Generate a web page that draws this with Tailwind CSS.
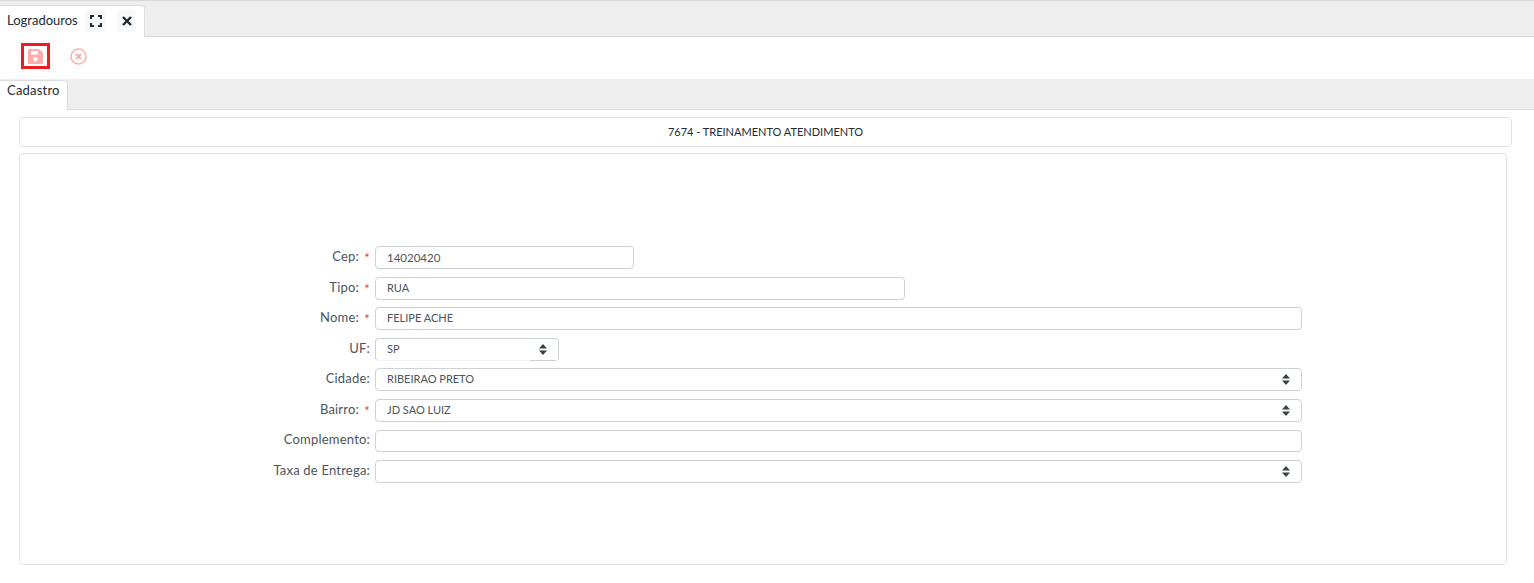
<!DOCTYPE html>
<html lang="en">
<head>
    <meta charset="UTF-8">
    <title>Logradouros</title>
    <script src="https://cdn.jsdelivr.net/npm/@tailwindcss/browser@4"></script>
</head>
<body class="bg-white font-['Lato',sans-serif] text-[11px] text-[#4a5560] h-[583px] overflow-hidden">
    <!-- top tab bar -->
    <div class="h-[37px] bg-[#eeeeee] border-t border-[#d9d9d9] border-b flex items-end">
        <div class="h-[32px] w-[145px] -mb-px pb-[2px] bg-white border border-b-0 border-l-0 border-[#dddddd] rounded-tr-[4px] flex items-center pl-[7px]">
            <span class="w-[78px] text-[13px] text-[#222b36]">Logradouros</span>
            <span class="w-[21px] h-[22px] bg-[#f7f8fa] rounded-[4px] flex items-center justify-center">
                <svg width="12" height="12" viewBox="0 0 12 12" fill="none" stroke="#1f2a37" stroke-width="2"><path d="M1 4V1h3M8 1h3v3M11 8v3H8M4 11H1V8"/></svg>
            </span>
            <span class="w-[19px] h-[22px] ml-[11px] bg-[#f7f8fa] rounded-[4px] flex items-center justify-center">
                <svg width="10" height="10" viewBox="0 0 10 10" fill="none" stroke="#1f2a37" stroke-width="2.4"><path d="M1 1l8 8M9 1l-8 8"/></svg>
            </span>
        </div>
    </div>
    <!-- toolbar -->
    <div class="h-[42px] flex items-center pl-[21px] pb-[4px]">
        <div class="w-[29px] h-[26px] border-[3px] border-[#ed1c24] flex items-center justify-center">
            <svg width="15" height="15" viewBox="0 0 15 15" fill="#ffacac"><path fill-rule="evenodd" d="M1.5 0H11l4 4v9.5a1.5 1.5 0 0 1-1.5 1.5h-12A1.5 1.5 0 0 1 0 13.5v-12A1.5 1.5 0 0 1 1.5 0zM3 2v3.5h7V2zM7.5 8a2.2 2.2 0 1 0 0 4.4 2.2 2.2 0 0 0 0-4.4z"/></svg>
        </div>
        <svg class="ml-[20px]" width="17" height="17" viewBox="0 0 17 17" fill="none" stroke="#ffacac"><circle cx="8.5" cy="8.5" r="7.5" stroke-width="1.5"/><path d="M6 6l5 5M11 6l-5 5" stroke-width="2"/></svg>
    </div>
    <!-- inner tabs -->
    <div class="h-[31px] bg-[#eeeeee] border-b border-[#d9d9d9] flex items-end">
        <div class="h-[30px] w-[68px] -mb-px bg-white border border-b-0 border-l-0 border-[#dddddd] rounded-tr-[4px] pl-[7px] text-[13px] tracking-[0.2px] text-[#222b36]">Cadastro</div>
    </div>
    <div class="pl-[19px] pt-[7px]">
        <div class="w-[1493px] h-[30px] border border-[#e2e2e2] rounded-[4px] flex items-center justify-center text-[#222b36]">7674 - TREINAMENTO ATENDIMENTO</div>
        <div class="w-[1488px] h-[412px] mt-[6px] border border-[#e2e2e2] rounded-[4px] pt-[92px] flex flex-col">
            <div class="flex h-[23px] mb-[8px] items-center">
                <label class="w-[350px] flex justify-end text-[13px] tracking-[0.2px]"><span>Cep:</span><span class="w-[11px] text-right text-[13px] pt-[2px] text-[#e8344a]">*</span></label>
                <div class="ml-[5px] w-[259px] h-[23px] border border-[#cdd1d8] rounded-[4px] pl-[11px] flex items-center text-[11.5px]">14020420</div>
            </div>
            <div class="flex h-[23px] mb-[7px] items-center">
                <label class="w-[350px] flex justify-end text-[13px] tracking-[0.2px]"><span>Tipo:</span><span class="w-[11px] text-right text-[13px] pt-[2px] text-[#e8344a]">*</span></label>
                <div class="ml-[5px] w-[530px] h-[23px] border border-[#cdd1d8] rounded-[4px] pl-[11px] flex items-center">RUA</div>
            </div>
            <div class="flex h-[23px] mb-[8px] items-center">
                <label class="w-[350px] flex justify-end text-[13px] tracking-[0.2px]"><span>Nome:</span><span class="w-[11px] text-right text-[13px] pt-[2px] text-[#e8344a]">*</span></label>
                <div class="ml-[5px] w-[927px] h-[23px] border border-[#cdd1d8] rounded-[4px] pl-[11px] flex items-center">FELIPE ACHE</div>
            </div>
            <div class="flex h-[23px] mb-[7px] items-center">
                <label class="w-[350px] text-right pb-[2px] text-[13px] tracking-[0.2px]">UF:</label>
                <!-- bottom border only shows under the arrow part -->
                <div class="relative ml-[5px] w-[184px] h-[23px] border border-[#cdd1d8] border-b-[#f1f2f4] rounded-[4px] pl-[11px] pr-[11px] flex items-center justify-between">SP
                    <svg width="8" height="11" viewBox="0 0 8 11" fill="#3a4048"><path d="M4 0l4 4.5H0zM4 11L0 6.5h8z"/></svg>
                    <span class="absolute right-[2px] -bottom-px w-[26px] h-px bg-[#cdd1d8]"></span>
                </div>
            </div>
            <div class="flex h-[23px] mb-[8px] items-center">
                <label class="w-[350px] text-right pb-[2px] text-[13px] tracking-[0.2px]">Cidade:</label>
                <div class="ml-[5px] w-[927px] h-[23px] border border-[#cdd1d8] rounded-[4px] pl-[11px] pr-[11px] flex items-center justify-between">RIBEIRAO PRETO
                    <svg width="8" height="11" viewBox="0 0 8 11" fill="#3a4048"><path d="M4 0l4 4.5H0zM4 11L0 6.5h8z"/></svg>
                </div>
            </div>
            <div class="flex h-[23px] mb-[8px] items-center">
                <label class="w-[350px] flex justify-end text-[13px] tracking-[0.2px]"><span>Bairro:</span><span class="w-[11px] text-right text-[13px] pt-[2px] text-[#e8344a]">*</span></label>
                <div class="ml-[5px] w-[927px] h-[23px] border border-[#cdd1d8] rounded-[4px] pl-[11px] pr-[11px] flex items-center justify-between">JD SAO LUIZ
                    <svg width="8" height="11" viewBox="0 0 8 11" fill="#3a4048"><path d="M4 0l4 4.5H0zM4 11L0 6.5h8z"/></svg>
                </div>
            </div>
            <div class="flex h-[22px] mb-[8px] items-center">
                <label class="w-[350px] text-right pb-[2px] text-[13px] tracking-[0.2px]">Complemento:</label>
                <div class="ml-[5px] w-[927px] h-[22px] border border-[#cdd1d8] rounded-[4px]"></div>
            </div>
            <div class="flex h-[23px] items-center">
                <label class="w-[350px] text-right pb-[2px] text-[13px] tracking-[0.2px]">Taxa de Entrega:</label>
                <div class="ml-[5px] w-[927px] h-[23px] border border-[#cdd1d8] rounded-[4px] pr-[11px] flex items-center justify-end">
                    <svg width="8" height="11" viewBox="0 0 8 11" fill="#3a4048"><path d="M4 0l4 4.5H0zM4 11L0 6.5h8z"/></svg>
                </div>
            </div>
        </div>
    </div>
</body>
</html>
